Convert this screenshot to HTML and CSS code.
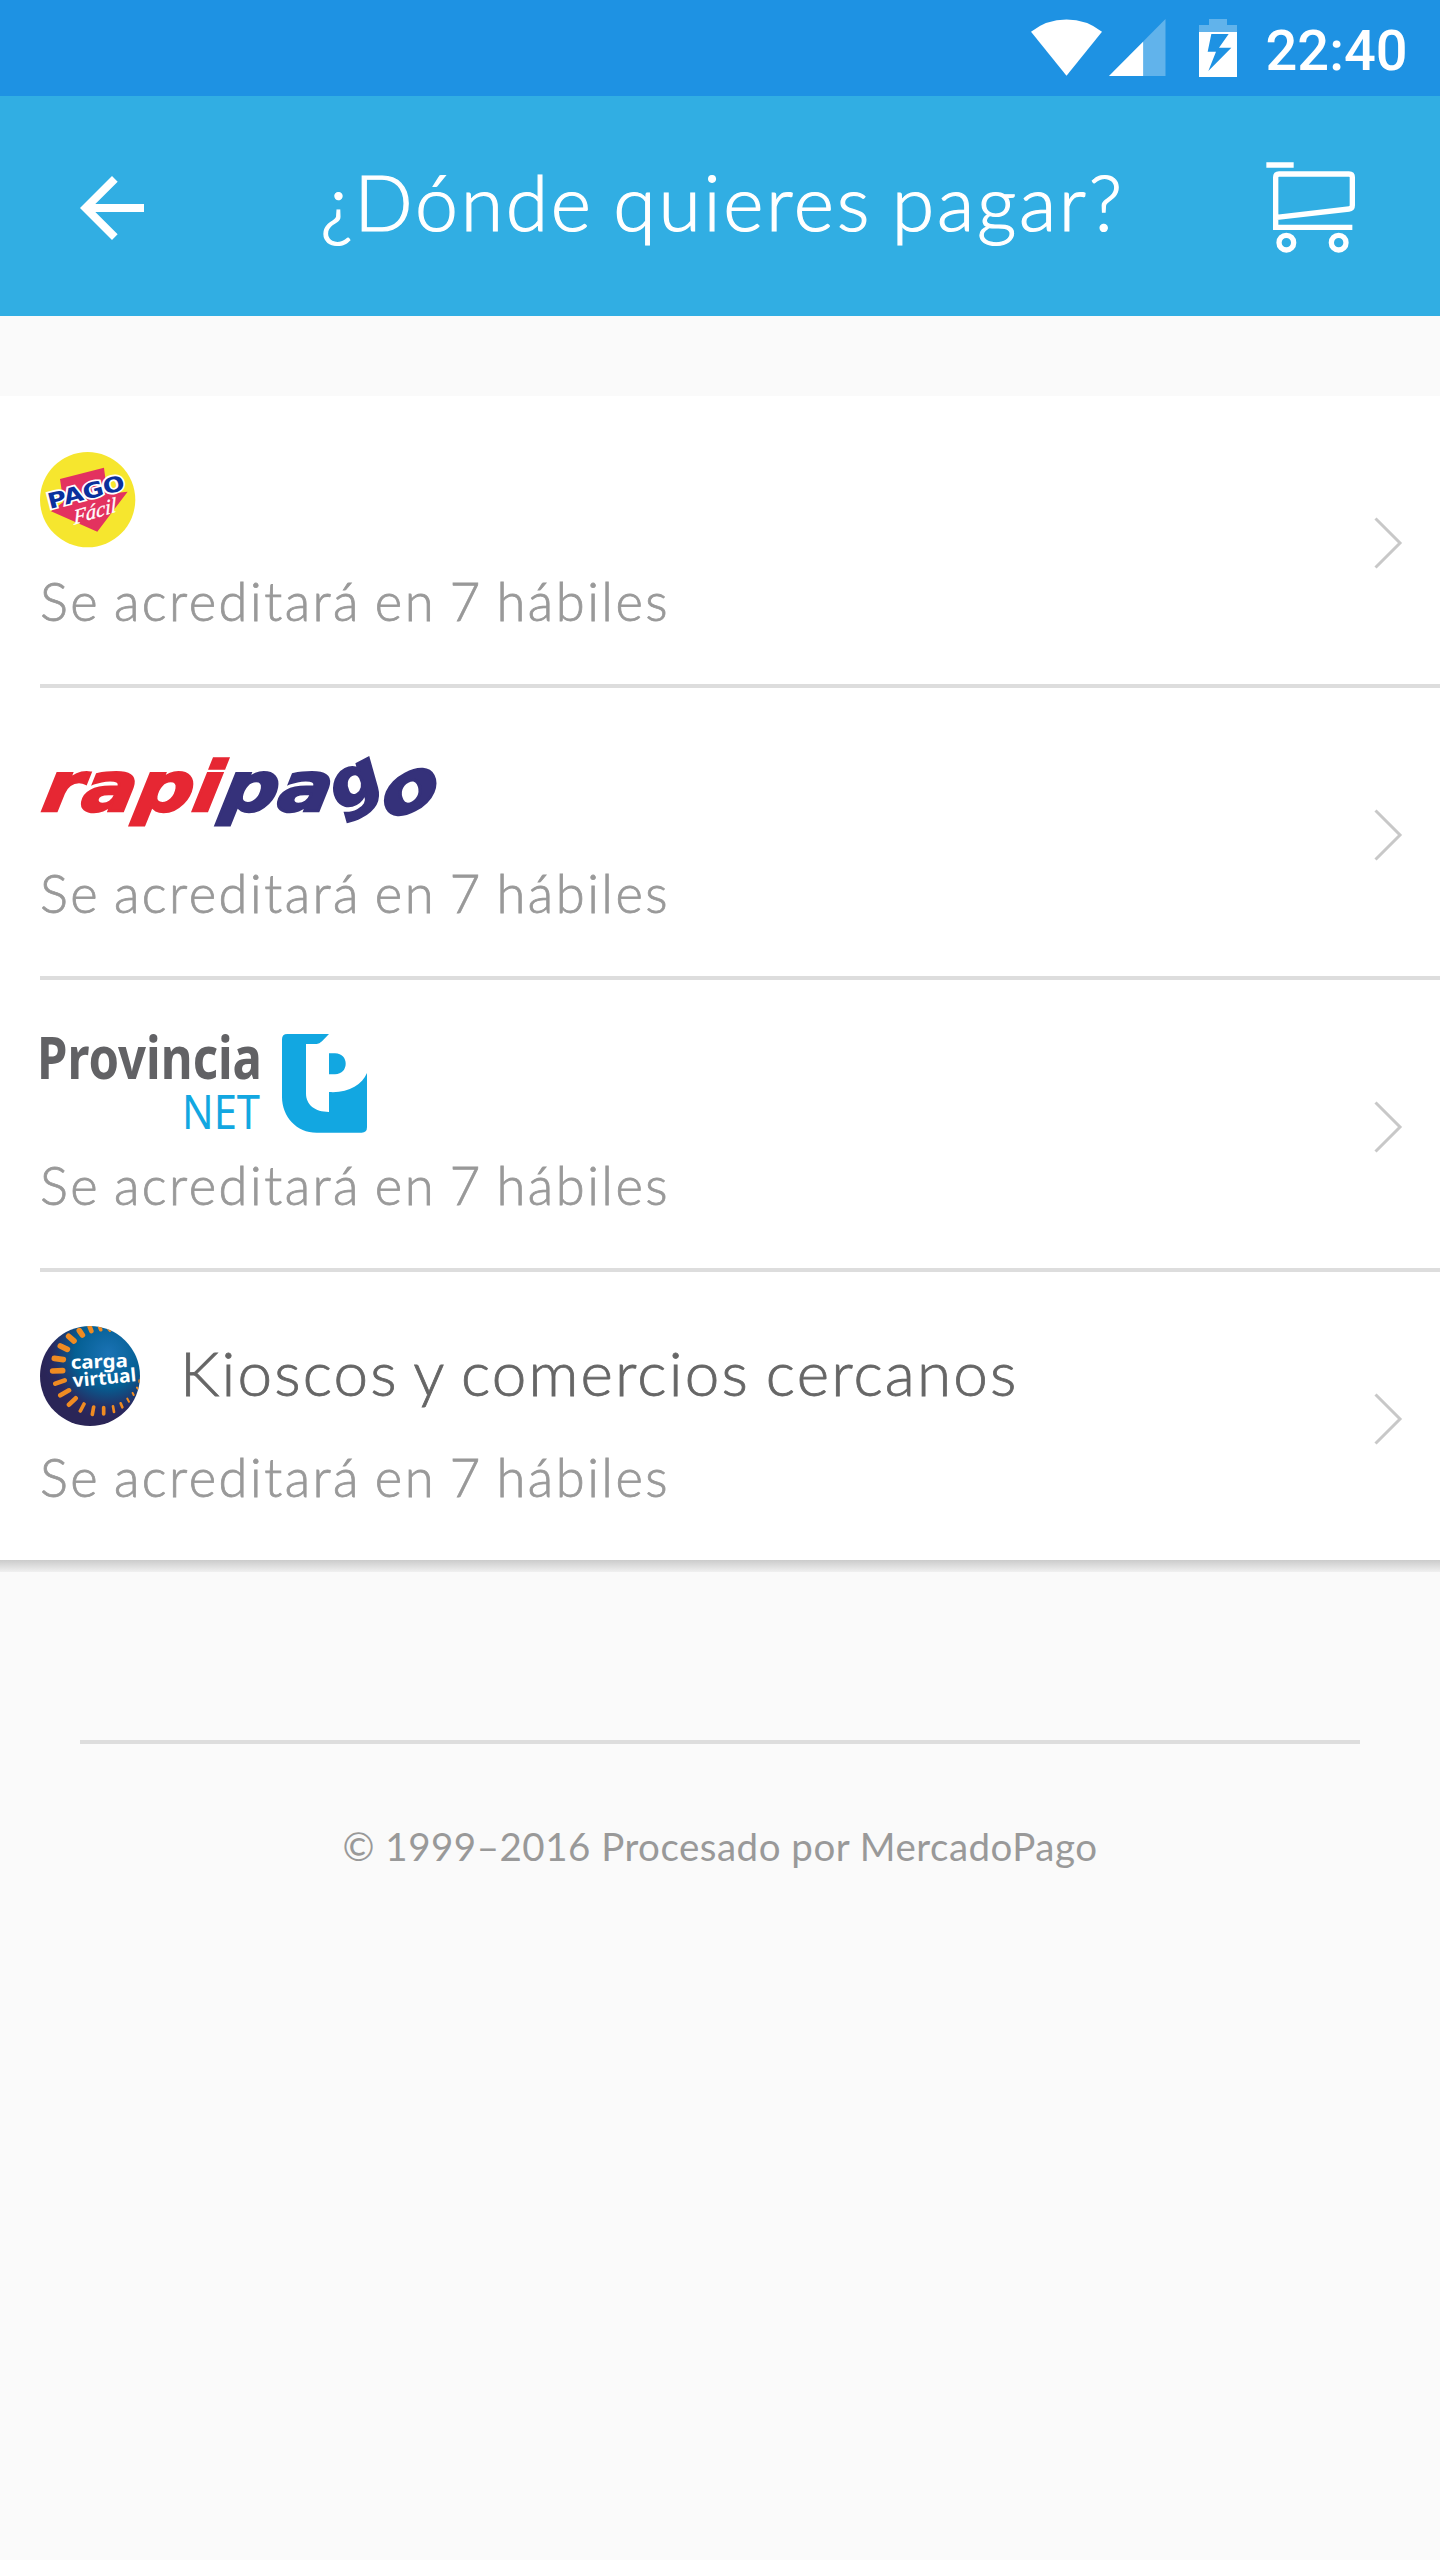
FILE: index.html
```html
<!DOCTYPE html>
<html lang="es">
<head>
<meta charset="utf-8">
<title>¿Dónde quieres pagar?</title>
<link rel="stylesheet" href="styles.css">
</head>
<body>
<div class="status">
  <svg class="wifi" viewBox="93 59 213 170"><path fill="#fff" d="M199.500 229 93 97Q139 60 199.500 60T306 97Z"/></svg>
  <svg class="signal" viewBox="327 59 169 170"><path fill="#fff" fill-opacity=".3" d="M496 59V229H327Z"/><path fill="#fff" d="M429 127V229H327Z"/></svg>
  <svg class="battery" viewBox="597 57 114 174"><path fill="#fff" fill-opacity=".3" d="M627 57H681V75H711V96H597V75H627Z"/><path fill="#fff" fill-rule="evenodd" d="M597 96H711V231H597ZM634 102 623 155H648L625 213 694 143H657L686 102Z"/></svg>
  <span class="time">22:40</span>
</div>
<header class="appbar">
  <svg class="back" viewBox="0 0 24 24"><path fill="#fff" d="M20 11H7.830l5.590-5.590L12 4l-8 8 8 8 1.410-1.410L7.830 13H20z"/></svg>
  <h1 class="title">¿Dónde quieres pagar?</h1>
  <svg class="cart" viewBox="795 480 275 285" fill="none" stroke="#fff" stroke-width="16"><path d="M799 495H881M1057 682H827V532Q827 522 837 522H1047Q1057 522 1057 532V616Q1057 626 1047 627L830 652"/><circle cx="859" cy="728" r="22"/><circle cx="1016" cy="728" r="22"/></svg>
</header>
<main>
  <ul class="methods">
    <li class="method">
      <div class="info">
        <div class="brand">
          <svg class="pagofacil" viewBox="120 65 286 286">
            <circle cx="263" cy="208" r="143" fill="#f6e62e"/>
            <path fill="#e3325f" d="M180 146 312 112 322 190 383 184 292 304 153 243 190 215Z"/>
            <g transform="translate(149 236) rotate(-14.500)"><text class="pf-pago" textLength="237" lengthAdjust="spacingAndGlyphs">PAGO</text></g>
            <g transform="translate(222 283) rotate(-17) skewX(-14)"><text class="pf-facil" textLength="134" lengthAdjust="spacingAndGlyphs">Fácil</text></g>
          </svg>
        </div>
        <p class="note">Se acreditará en 7 hábiles</p>
      </div>
      <svg class="chevron" viewBox="0 0 28 52"><path d="M1.500 1.500 26 26 1.500 50.500"/></svg>
    </li>
    <li class="method">
      <div class="info">
        <div class="brand">
          <svg class="rapipago" viewBox="0 0 400 100">
            <g transform="translate(0 69) skewX(-10)"><text class="rp red" textLength="178" lengthAdjust="spacingAndGlyphs">rapi</text><text class="rp navy" x="179" textLength="110" lengthAdjust="spacingAndGlyphs">pa</text></g>
            <g transform="translate(301 70) rotate(-28)"><text class="rp navy go" textLength="52" lengthAdjust="spacingAndGlyphs">g</text></g>
            <g transform="translate(351 80) rotate(-28)"><text class="rp navy go" textLength="62" lengthAdjust="spacingAndGlyphs">o</text></g>
          </svg>
        </div>
        <p class="note">Se acreditará en 7 hábiles</p>
      </div>
      <svg class="chevron" viewBox="0 0 28 52"><path d="M1.500 1.500 26 26 1.500 50.500"/></svg>
    </li>
    <li class="method">
      <div class="info">
        <div class="brand">
          <svg class="provincia" viewBox="0 0 330 100">
            <text class="pn-name" x="-3" y="44.500" textLength="225" lengthAdjust="spacingAndGlyphs">Provincia</text>
            <text class="pn-net" x="142" y="95" textLength="78" lengthAdjust="spacingAndGlyphs">NET</text>
            <g transform="translate(-40 -34) scale(.33333)"><path fill="#12a7e1" d="M862 102H987L966 124Q958 132 950 132H918V280C918 315 945 336 987 336V276C1043 280 1086 255 1101 219V382Q1101 398 1085 398H950C890 398 846 350 846 290V118Q846 102 862 102ZM987 160H1005C1048 160 1048 223 1005 223H987Z"/></g>
          </svg>
        </div>
        <p class="note">Se acreditará en 7 hábiles</p>
      </div>
      <svg class="chevron" viewBox="0 0 28 52"><path d="M1.500 1.500 26 26 1.500 50.500"/></svg>
    </li>
    <li class="method">
      <div class="info">
        <div class="brand">
          <svg class="carga" viewBox="120 108 300 300">
            <defs>
              <radialGradient id="globe" gradientUnits="userSpaceOnUse" cx="325" cy="190" r="200"><stop offset="0" stop-color="#1a72b4"/><stop offset=".5" stop-color="#045f93"/><stop offset=".85" stop-color="#292960"/><stop offset="1" stop-color="#2a2557"/></radialGradient>
              <clipPath id="disc"><circle cx="270" cy="258" r="150"/></clipPath>
            </defs>
            <g clip-path="url(#disc)">
              <path fill="url(#globe)" d="M120 108H420V408H120Z"/>
              <g stroke="#ef8b22" stroke-linecap="round">
                <path stroke-width="17" d="M158 243 188 242M163 205 190 209M181 168 202 178M206 139 222 153M238 122 247 135"/>
                <path stroke-width="14" d="M269 110 274 123M166 281 194 271M181 316 207 301M207 344 227 325"/>
                <path stroke-width="11" d="M298 108 302 119M241 363 252 342M277 373 281 351M311 372 311 353"/>
                <path stroke-width="8" d="M325 116 330 122M342 366 339 349M367 352 362 340"/>
                <path stroke-width="6" d="M387 335 382 326M401 315 398 309M414 297 411 293M418 276V271"/>
              </g>
            </g>
            <g transform="translate(213 237) rotate(-2)"><text class="cv" textLength="171" lengthAdjust="spacingAndGlyphs">carga</text></g>
            <g transform="translate(220 292) rotate(-5.500)"><text class="cv" textLength="191" lengthAdjust="spacingAndGlyphs">virtual</text></g>
          </svg>
          <span class="name">Kioscos y comercios cercanos</span>
        </div>
        <p class="note">Se acreditará en 7 hábiles</p>
      </div>
      <svg class="chevron" viewBox="0 0 28 52"><path d="M1.500 1.500 26 26 1.500 50.500"/></svg>
    </li>
  </ul>
  <div class="shadow"></div>
</main>
<footer class="footer"><span>© 1999–2016 Procesado por MercadoPago</span></footer>
</body>
</html>
```
FILE: styles.css
```css
* { box-sizing: border-box; }
body { margin: 0; min-height: 2560px; background: #fafafa; font-family: Lato, "Open Sans", sans-serif; }
svg { display: block; flex: none; overflow: visible; }

.status { height: 96px; background: #1e92e3; display: flex; justify-content: flex-end; padding: 19px 33px 0 0; }
.wifi { width: 71px; height: 57px; }
.signal { width: 56.500px; height: 57px; margin-left: 7px; }
.battery { width: 38px; height: 58px; margin-left: 33.500px; }
.time { width: 141.500px; margin-left: 28.500px; font: 500 56px/64px Roboto, sans-serif; color: #fff; white-space: nowrap; }

.appbar { height: 220px; background: #31aee3; display: flex; align-items: center; justify-content: space-between; padding: 0 83px 0 64px; }
.back { width: 96px; height: 96px; margin-top: 4px; }
.title { margin: 0; padding: 0 0 11px 20px; font-size: 77px; font-weight: 300; line-height: 88px; letter-spacing: 2.700px; word-spacing: -4px; color: #fff; -webkit-text-stroke: 1.200px #fff; white-space: nowrap; }
.cart { width: 91.700px; height: 95px; margin-top: 3px; }

.methods { list-style: none; margin: 80px 0 0; padding: 0 0 0 40px; background: #fff; }
.method { height: 292px; display: flex; justify-content: space-between; border-bottom: 4px solid #ddd; padding: 54px 38px 0 0; }
.method:last-child { height: 288px; border-bottom: 0; }
.brand { height: 100px; display: flex; align-items: center; gap: 40px; }
.name { padding-bottom: 9px; font-size: 62px; font-weight: 300; line-height: 72px; letter-spacing: 2.150px; word-spacing: -3px; color: #666; -webkit-text-stroke: .8px #666; white-space: nowrap; }
.note { margin: 21px 0 0; font-size: 52.500px; font-weight: 300; line-height: 60px; letter-spacing: 2.500px; word-spacing: -3px; color: #999; -webkit-text-stroke: .8px #999; white-space: nowrap; }
.chevron { width: 28px; height: 52px; margin-top: 67px; fill: none; stroke: #c8c8c8; stroke-width: 3; }
.shadow { height: 12px; background: linear-gradient(#cbcbcb, #f0f0f0); }

.pagofacil { width: 95.300px; height: 95.300px; }
.pf-pago { font: 700 64px "DejaVu Sans", sans-serif; fill: #0a309c; stroke: #fff; stroke-width: 10; paint-order: stroke; }
.pf-facil { font: italic 400 62px "Liberation Serif", serif; fill: #fff; stroke: #fff; stroke-width: 1; }
.rapipago { width: 400px; height: 100px; }
.rp { font: italic 700 69px "DejaVu Sans", sans-serif; stroke-width: 2.500; }
.go { font-size: 64px; }
.red { fill: #e62733; stroke: #e62733; }
.navy { fill: #35317a; stroke: #35317a; }
.provincia { width: 330px; height: 100px; }
.pn-name { font: 700 59px "Noto Sans", sans-serif; fill: #626265; }
.pn-net { font: 400 48px "Noto Sans", sans-serif; fill: #12a7e1; }
.carga { width: 100px; height: 100px; }
.cv { font: 700 56px "Noto Sans", sans-serif; fill: #fff; }

.footer { margin: 168px 80px 0; border-top: 4px solid #ddd; padding-top: 79px; text-align: center; font-size: 38.500px; line-height: 46px; letter-spacing: .500px; color: #999; white-space: nowrap; }
```
